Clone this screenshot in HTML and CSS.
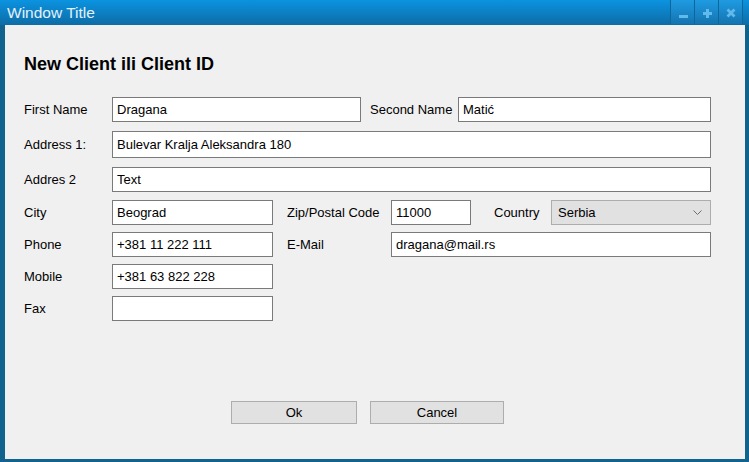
FILE: index.html
```html
<!DOCTYPE html>
<html lang="en">
<head>
<meta charset="utf-8">
<title>Window Title</title>
<link rel="stylesheet" href="styles.css">
</head>
<body>
<div class="window">
  <div class="titlebar">
    <span class="title">Window Title</span>
    <div class="controls">
      <button class="ctl" aria-label="Minimize"><svg width="23" height="24" viewBox="0 0 23 24"><rect x="8" y="15" width="9" height="3" fill="#62baec"/></svg></button>
      <button class="ctl" aria-label="Maximize"><svg width="23" height="24" viewBox="0 0 23 24"><path d="M8 13.5h9M12.5 9v9" stroke="#62baec" stroke-width="3"/></svg></button>
      <button class="ctl" aria-label="Close"><svg width="23" height="24" viewBox="0 0 23 24"><path d="M8.5 9.5l7 7M15.5 9.5l-7 7" stroke="#62baec" stroke-width="2.8"/></svg></button>
    </div>
  </div>
  <div class="content">
    <h1 class="heading">New Client ili Client ID</h1>
    <div class="form">
      <div class="row">
        <label class="lbl w88">First Name</label>
        <input class="field w249" value="Dragana">
        <label class="lbl w88 ml9">Second Name</label>
        <input class="field w253" value="Matić">
      </div>
      <div class="row tall mt9">
        <label class="lbl w88">Address 1:</label>
        <input class="field w599" value="Bulevar Kralja Aleksandra 180">
      </div>
      <div class="row mt9">
        <label class="lbl w88">Addres 2</label>
        <input class="field w599" value="Text">
      </div>
      <div class="row mt8">
        <label class="lbl w88">City</label>
        <input class="field w161" value="Beograd">
        <label class="lbl w104 ml14">Zip/Postal Code</label>
        <input class="field w80" value="11000">
        <label class="lbl w57 ml23">Country</label>
        <div class="select w160"><span>Serbia</span><svg width="9" height="6" viewBox="0 0 9 6"><path d="M0.5 0.5l4 4 4-4" fill="none" stroke="#6d6d6d" stroke-width="1"/></svg></div>
      </div>
      <div class="row mt7">
        <label class="lbl w88">Phone</label>
        <input class="field w161" value="+381 11 222 111">
        <label class="lbl w104 ml14">E-Mail</label>
        <input class="field w320" value="dragana@mail.rs">
      </div>
      <div class="row mt7">
        <label class="lbl w88">Mobile</label>
        <input class="field w161" value="+381 63 822 228">
      </div>
      <div class="row mt7">
        <label class="lbl w88">Fax</label>
        <input class="field w161" value="">
      </div>
      <div class="actions">
        <button class="btn ok">Ok</button>
        <button class="btn cancel">Cancel</button>
      </div>
    </div>
  </div>
</div>
</body>
</html>
```

FILE: styles.css
```css
* { box-sizing: border-box; }
html, body { margin: 0; padding: 0; }
body {
  font-family: "Liberation Sans", Arial, sans-serif;
  font-size: 13px;
  color: #000;
  background: #f0f0f0;
}
.window {
  width: 749px;
  height: 462px;
  display: flex;
  flex-direction: column;
}
.titlebar {
  height: 25px;
  flex: none;
  display: flex;
  align-items: flex-start;
  justify-content: space-between;
  background: linear-gradient(#0b93e0, #0d6ca6);
}
.title {
  color: #e3f1fb;
  font-size: 15.5px;
  line-height: 25px;
  padding-left: 7px;
}
.controls {
  display: flex;
  gap: 1px;
  padding: 0 1px;
  margin-right: 6px;
  height: 24px;
  background: #0d679d;
}
.ctl {
  width: 23px;
  height: 24px;
  padding: 0;
  border: 0;
  display: block;
  background: linear-gradient(#1f9be2, #1474b0);
}
.ctl svg { display: block; }
.content {
  flex: 1;
  border-left: 5px solid #11628d;
  border-right: 4px solid #11628d;
  border-bottom: 3px solid #11628d;
  background: #f0f0f0;
  padding: 29px 0 0 19px;
}
.heading {
  margin: 0;
  font-size: 18px;
  line-height: 21px;
  font-weight: bold;
}
.form { margin-top: 22px; }
.row {
  display: flex;
  align-items: center;
  height: 25px;
}
.row.tall { height: 27px; }
.lbl { flex: none; white-space: nowrap; }
.field {
  height: 100%;
  border: 1px solid #7a7a7a;
  background: #fff;
  font: inherit;
  color: #000;
  padding: 0 4px;
  margin: 0;
  outline: none;
}
.select {
  height: 100%;
  border: 1px solid #adadad;
  background: #e1e1e1;
  display: flex;
  align-items: center;
  justify-content: space-between;
  padding: 0 8px 0 6px;
}
.select svg { display: block; }
.w57 { width: 57px; }
.w80 { width: 80px; }
.w88 { width: 88px; }
.w104 { width: 104px; }
.w160 { width: 160px; }
.w161 { width: 161px; }
.w249 { width: 249px; }
.w253 { width: 253px; }
.w320 { width: 320px; }
.w599 { width: 599px; }
.ml9 { margin-left: 9px; }
.ml14 { margin-left: 14px; }
.ml23 { margin-left: 23px; }
.mt7 { margin-top: 7px; }
.mt8 { margin-top: 8px; }
.mt9 { margin-top: 9px; }
.actions {
  display: flex;
  gap: 13px;
  margin-top: 80px;
  margin-left: 207px;
}
.btn {
  height: 23px;
  border: 1px solid #adadad;
  background: #e1e1e1;
  font: inherit;
  color: #000;
  padding: 0;
}
.ok { width: 126px; }
.cancel { width: 134px; }
```
